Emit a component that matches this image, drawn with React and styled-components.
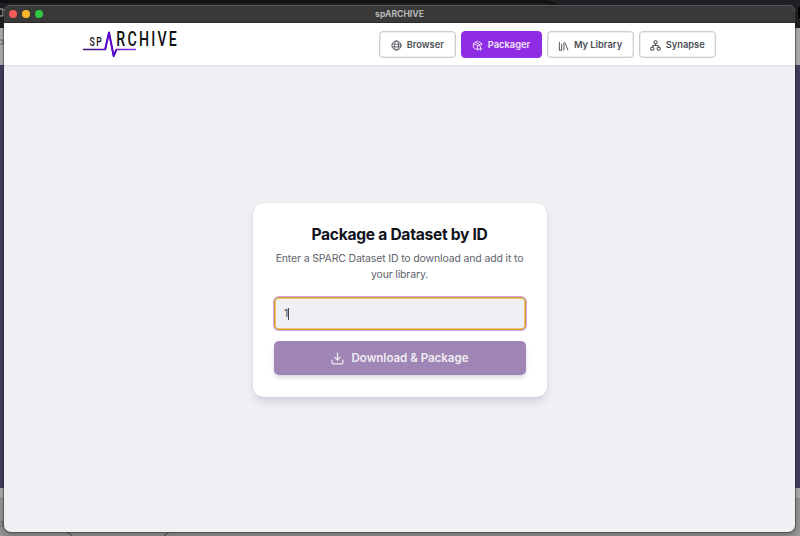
import React from "react";
import styled, { createGlobalStyle } from "styled-components";

const GlobalStyle = createGlobalStyle`
  * { box-sizing: border-box; }
  body { margin: 0; overflow: hidden; }
`;

const Desktop = styled.div`
  position: relative;
  width: 800px;
  height: 536px;
  padding: 5px 5px 4px 4px;
  overflow: hidden;
  font-family: Inter, "Liberation Sans", sans-serif;
`;

const Backdrop = styled.div`
  position: absolute;
  inset: 0;
  display: grid;
  grid-template-rows: 28px 37px 423px 11px 37px;
`;

const Band = styled.div`
  background: ${(p) => p.$color};
  border-bottom: 1px solid ${(p) => p.$line || p.$color};
`;

const BackdropDetails = styled.svg`
  position: absolute;
  inset: 0;
`;

const Window = styled.main`
  position: relative;
  display: flex;
  flex-direction: column;
  height: 527px;
  overflow: hidden;
  border-radius: 7px;
  background: #eff0f4;
  box-shadow: 0 0 0 1px rgba(40, 40, 45, 0.45), 0 3px 8px rgba(0, 0, 0, 0.35);
`;

const TitleBar = styled.div`
  display: grid;
  grid-template-columns: 60px 1fr 60px;
  align-items: center;
  flex: 0 0 18px;
  border-top: 1px solid #555557;
  border-bottom: 1px solid #29292a;
  background: #393939;
`;

const Lights = styled.div`
  display: flex;
  gap: 5px;
  padding-left: 5px;
`;

const Light = styled.span`
  width: 8px;
  height: 8px;
  border-radius: 50%;
  background: ${(p) => p.$color};
`;

const WindowTitle = styled.div`
  text-align: center;
  color: #b8b8b8;
  font-size: 8.6px;
  font-weight: 700;
  line-height: 14px;
`;

const Header = styled.header`
  display: flex;
  align-items: center;
  justify-content: space-between;
  flex: 0 0 43px;
  padding: 0 79px 0 78px;
  background: #fff;
  border-bottom: 1px solid #e4e4e9;
  box-shadow: 0 1px 1px rgba(30, 30, 60, 0.03);
`;

const Logo = styled.svg`
  display: block;
  overflow: visible;
`;

const Nav = styled.nav`
  display: flex;
  gap: 5px;
`;

const NavButton = styled.button`
  display: flex;
  align-items: center;
  justify-content: center;
  gap: 5px;
  width: ${(p) => p.$width}px;
  height: 27px;
  padding: 1px 0 0;
  border: 1px solid ${(p) => (p.$active ? "#8f2de5" : "#cdcdd5")};
  box-shadow: inset 0 0 0 0.5px ${(p) => (p.$active ? "#8f2de5" : "#dedee4")};
  border-radius: 4px;
  background: ${(p) => (p.$active ? "#8f2de5" : "#fff")};
  color: ${(p) => (p.$active ? "#f4e6fc" : "#4c4e56")};
  font: 600 9.3px/14px Inter, sans-serif;
  white-space: nowrap;
`;

const Icon = styled.svg`
  flex: none;
  fill: none;
  stroke: currentColor;
  stroke-linecap: round;
  stroke-linejoin: round;
  stroke-width: ${(p) => p.$stroke || 2};
`;

const NavIcon = styled(Icon)`
  margin-top: 1px;
`;

const Content = styled.section`
  display: flex;
  flex: 1;
  justify-content: center;
  align-items: flex-start;
  padding-top: 136.5px;
`;

const Card = styled.form`
  display: flex;
  flex-direction: column;
  width: 294px;
  height: 194px;
  padding: 22px 21px 21px;
  border-radius: 10px;
  background: #fff;
  box-shadow: 0 0 1px rgba(30, 30, 60, 0.2), 0 6px 10px -2px rgba(30, 30, 60, 0.15);
`;

const Heading = styled.h1`
  margin: 0;
  text-align: center;
  color: #10121c;
  font-size: 15.6px;
  font-weight: 700;
  line-height: 20px;
  letter-spacing: -0.28px;
  white-space: nowrap;
`;

const Description = styled.p`
  margin: 6px -5px 0;
  text-align: center;
  color: #62646d;
  font-size: 10.5px;
  letter-spacing: -0.15px;
  line-height: 16px;
`;

const Field = styled.div`
  display: flex;
  align-items: center;
  flex: none;
  height: 33px;
  margin-top: 14.5px;
  padding: 0 9.5px;
  border: 1px solid #dba027;
  border-radius: 5px;
  background: #eff0f4;
  box-shadow: 0 0 0 1px #cda3e6, inset 0 0 0 0.8px #e5b452;
  color: #45454d;
  font-size: 10.5px;
`;

const Caret = styled.span`
  width: 1px;
  height: 12px;
  background: #45454d;
`;

const Submit = styled.button`
  display: flex;
  align-items: center;
  justify-content: center;
  gap: 8px;
  flex: none;
  height: 34px;
  margin-top: 11px;
  padding: 0;
  border: 0;
  border-radius: 5px;
  background: #a085b7;
  box-shadow: 0 3px 5px -1px rgba(50, 40, 80, 0.22);
  color: #f0edf2;
  font: 600 11.5px/16px Inter, sans-serif;
`;

function BrandLogo() {
  return (
    <Logo width="98" height="30" viewBox="0 0 98 30" role="img" aria-label="spARCHIVE">
      <defs>
        <linearGradient id="pulse" gradientUnits="userSpaceOnUse" x1="1" y1="0" x2="54" y2="0">
          <stop offset="0" stopColor="#35106b" />
          <stop offset="0.5" stopColor="#5909c9" />
          <stop offset="1" stopColor="#8b35e0" />
        </linearGradient>
      </defs>
      <g fill="#111" fontFamily="Roboto, sans-serif">
        <text transform="translate(7.4 16.8) scale(0.72 1)" fontSize="12" letterSpacing="2.2" fontWeight="500">SP</text>
        <text transform="translate(34.3 16.8) scale(0.72 1)" fontSize="19.7" letterSpacing="3.1" fontWeight="500">RCHIVE</text>
      </g>
      <path d="M1 20.5H23.2L27 3.5L31.5 27L34.2 20.5H54" fill="none" stroke="url(#pulse)" strokeWidth="1.4" strokeLinejoin="round" />
      <path d="M23.2 20.5L27 3.5L31.7 27L34.2 21" fill="none" stroke="#5909c9" strokeWidth="2" strokeLinejoin="round" />
    </Logo>
  );
}

function GlobeIcon() {
  return (
    <NavIcon width="11" height="11" viewBox="0 0 24 24" $stroke={1.9}>
      <circle cx="12" cy="12" r="10" />
      <ellipse cx="12" cy="12" rx="4.5" ry="10" />
      <path d="M2.5 9h19M2.5 15h19" />
    </NavIcon>
  );
}

function PackageIcon() {
  return (
    <NavIcon width="11" height="11" viewBox="0 0 24 24">
      <path d="M21 11V7.5L12 2.5L3 7.5V16.5L12 21.5L14 20.4M3.3 7.7L12 12.5L20.7 7.7M12 12.5V21M7.5 5L16.5 10V13M18.5 14v8M15 18.5l3.5 3.5l3.5-3.5" />
    </NavIcon>
  );
}

function LibraryIcon() {
  return (
    <NavIcon width="11" height="11" viewBox="0 0 24 24">
      <path d="M3 5v17M8 9v13M13 5v17M16 7l5.5 15M3 22h5" />
    </NavIcon>
  );
}

function SynapseIcon() {
  return (
    <NavIcon width="11" height="11" viewBox="0 0 24 24" $stroke={2.2}>
      <circle cx="12" cy="5" r="3.6" />
      <circle cx="5" cy="19" r="3.6" />
      <circle cx="19" cy="19" r="3.6" />
      <path d="M12 8.6v3.4M5 15.4c0-2.4 1-3.4 3-3.4h8c2 0 3 1 3 3.4" />
    </NavIcon>
  );
}

const navItems = [
  { label: "Browser", width: 76.5, icon: GlobeIcon },
  { label: "Packager", width: 81, icon: PackageIcon, active: true },
  { label: "My Library", width: 87, icon: LibraryIcon },
  { label: "Synapse", width: 77.5, icon: SynapseIcon },
];

export default function App() {
  return (
    <Desktop>
      <GlobalStyle />
      <Backdrop>
        <Band $color="#202124" />
        <Band $color="#b4b4b6" />
        <Band $color="#483f65" />
        <Band $color="#b2b2b2" $line="#8c8c8c" />
        <Band $color="#999999" />
      </Backdrop>
      <BackdropDetails width="800" height="536" fill="none">
        <path d="M0 1.5H545L555 4" stroke="#111214" strokeWidth="3" />
        <path d="M0 9H3V16H0" stroke="#c5c5c7" strokeWidth="1" />
        <path d="M799 7V18" stroke="#050506" strokeWidth="2" />
        <path d="M0 40H3V44H0M0 522H3V526H0" stroke="#68686a" />
        <path d="M67 532L72 536M169 532L164 536" stroke="#4a4a4a" />
      </BackdropDetails>
      <Window>
        <TitleBar>
          <Lights>
            <Light $color="#fc5b57" />
            <Light $color="#fdb82c" />
            <Light $color="#30c842" />
          </Lights>
          <WindowTitle>spARCHIVE</WindowTitle>
        </TitleBar>
        <Header>
          <BrandLogo />
          <Nav>
            {navItems.map(({ label, width, icon: Glyph, active }) => (
              <NavButton key={label} type="button" $width={width} $active={active}>
                <Glyph />
                {label}
              </NavButton>
            ))}
          </Nav>
        </Header>
        <Content>
          <Card>
            <Heading>Package a Dataset by ID</Heading>
            <Description>
              Enter a SPARC Dataset ID to download and add it to
              <br />
              your library.
            </Description>
            <Field>
              1<Caret />
            </Field>
            <Submit type="button">
              <Icon width="13" height="13" viewBox="0 0 24 24" $stroke={2.3}>
                <path d="M2 15v4a3 3 0 0 0 3 3h14a3 3 0 0 0 3-3v-4M7 10l5 5l5-5M12 15V2" />
              </Icon>
              Download &amp; Package
            </Submit>
          </Card>
        </Content>
      </Window>
    </Desktop>
  );
}
